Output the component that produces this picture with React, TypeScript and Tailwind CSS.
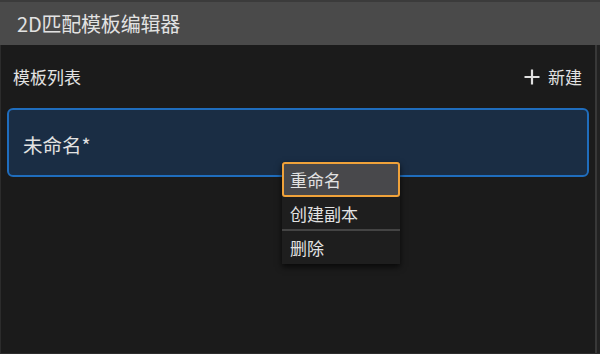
import React from "react";

const font = { fontFamily: '"Noto Sans CJK SC", "Noto Sans", sans-serif' };

function PlusIcon() {
    return (
        <svg width="16" height="16" viewBox="0 0 16 16" className="shrink-0">
            <path d="M8 0.5v15M0.5 8h15" stroke="#e0e0e0" strokeWidth="2.2" />
        </svg>
    );
}

export default function App() {
    return (
        <div className="w-[600px] h-[354px] flex flex-col bg-[#1b1b1b] text-[#e2e2e2] overflow-hidden" style={font}>
            {/* title bar */}
            <div className="h-[45px] shrink-0 flex items-center pl-[17px] bg-[#4a4a4a] border-t-2 border-[#3b3b3b]">
                <span className="text-[20px] leading-none tracking-[-0.2px]">2D匹配模板编辑器</span>
            </div>

            <div className="flex-1 flex flex-row border-l border-b border-[#2c2c2c]">
                <div className="flex-1 flex flex-col relative">
                    {/* header */}
                    <div className="h-[63px] flex items-center justify-between pl-[12px] pr-[13px]">
                        <span className="text-[17px] leading-none">模板列表</span>
                        <div className="flex items-center gap-[8px]">
                            <PlusIcon />
                            <span className="text-[17px] leading-none">新建</span>
                        </div>
                    </div>

                    {/* template card */}
                    <div className="mx-[6px] h-[69px] flex items-center pl-[14px] pt-[4px] rounded-[6px] border-2 border-[#1f6dbd] bg-[#1a2d44]">
                        <span className="text-[19.5px] leading-none">未命名*</span>
                    </div>

                    {/* context menu */}
                    <div className="absolute left-[281px] top-[117px] w-[118px] flex flex-col bg-[#1e1e1e] shadow-[0_3px_6px_rgba(0,0,0,0.7)] pb-[1px]">
                        <div className="h-[35px] flex items-center pl-[6px] rounded-[3px] border-2 border-[#f0a23a] bg-[#48484b]">
                            <span className="text-[17px] leading-none">重命名</span>
                        </div>
                        <div className="h-[32px] flex items-center pl-[8px]">
                            <span className="text-[17px] leading-none">创建副本</span>
                        </div>
                        <div className="h-[2px] bg-[#444444]" />
                        <div className="h-[32px] flex items-center pl-[8px]">
                            <span className="text-[17px] leading-none">删除</span>
                        </div>
                    </div>
                </div>
                <div className="w-[2px] bg-[#383838]" />
                <div className="w-[3px] bg-[#222222]" />
            </div>
        </div>
    );
}
